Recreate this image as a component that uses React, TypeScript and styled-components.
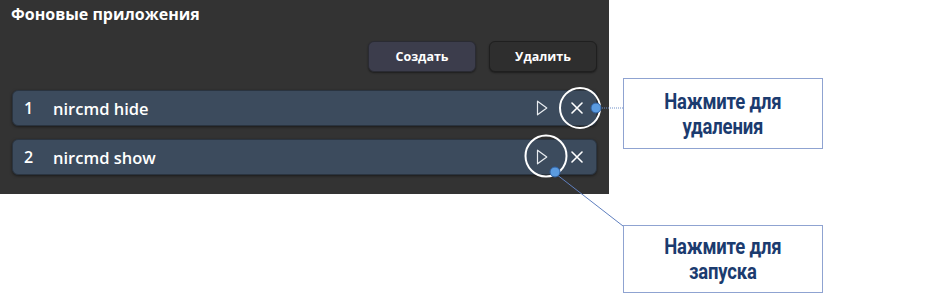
import React from 'react'
import styled, { createGlobalStyle } from 'styled-components'

const GlobalStyle = createGlobalStyle`
  html, body {
    margin: 0;
    padding: 0;
    background: #ffffff;
  }
  body {
    font-family: "Open Sans", "Noto Sans", sans-serif;
  }
`

const Page = styled.div`
  position: relative;
  width: 929px;
  height: 302px;
  overflow: hidden;
`

const Panel = styled.div`
  width: 609px;
  height: 194px;
  box-sizing: border-box;
  background: #333333;
  padding: 3px 12px 0 12px;
  display: flex;
  flex-direction: column;
`

const Title = styled.h1`
  margin: 0 0 0 -1px;
  font-size: 16px;
  font-weight: 700;
  color: #ffffff;
  line-height: 22px;
`

const Toolbar = styled.div`
  display: flex;
  justify-content: flex-end;
  gap: 13px;
  margin-top: 16px;
  margin-bottom: 18px;
`

const Button = styled.button<{ $primary?: boolean }>`
  width: 108px;
  height: 31px;
  border-radius: 6px;
  border: 1px solid ${({ $primary }) => ($primary ? '#2a2b33' : '#1f1f1f')};
  background: ${({ $primary }) => ($primary ? '#3c3d4c' : '#2e2e2e')};
  color: #ffffff;
  font-family: "Open Sans", "Noto Sans", sans-serif;
  font-size: 12.5px;
  font-weight: 700;
  box-shadow: 0 1px 2px rgba(0, 0, 0, 0.45);
  cursor: pointer;
`

const List = styled.div`
  display: flex;
  flex-direction: column;
  gap: 13px;
`

const Row = styled.div`
  display: flex;
  align-items: center;
  height: 36px;
  box-sizing: border-box;
  border-radius: 6px;
  border: 1px solid #2a3440;
  background: #3c4b5d;
  box-shadow: 0 1px 3px rgba(0, 0, 0, 0.5);
  padding: 0 6px 0 11px;
  color: #ffffff;
`

const Index = styled.span`
  width: 29px;
  font-size: 16px;
  font-weight: 600;
`

const Name = styled.span`
  flex: 1;
  font-size: 16.5px;
  font-weight: 600;
`

const IconButton = styled.span`
  width: 26px;
  height: 26px;
  display: flex;
  align-items: center;
  justify-content: center;
  margin-left: 9px;
`

const Callout = styled.div<{ $top: number; $height: number }>`
  position: absolute;
  left: 623px;
  top: ${({ $top }) => $top}px;
  width: 200px;
  height: ${({ $height }) => $height}px;
  box-sizing: border-box;
  border: 1px solid #8fa3d1;
  background: #ffffff;
  display: flex;
  align-items: center;
  justify-content: center;
  text-align: center;
  color: #1b3b6f;
  font-family: "Roboto", "Liberation Sans", sans-serif;
  font-weight: 700;
  font-size: 22px;
  line-height: 25px;
`

const CalloutText = styled.span`
  display: inline-block;
  transform: scaleX(0.84);
  letter-spacing: -0.2px;
`

const Overlay = styled.svg`
  position: absolute;
  left: 0;
  top: 0;
  pointer-events: none;
`

const PlayIcon = () => (
  <svg width="12" height="16" viewBox="0 0 12 16">
    <path d="M1.5 1.2 L10.8 8 L1.5 14.8 Z" fill="none" stroke="#e8ecf0" strokeWidth="1.2" strokeLinejoin="round" />
  </svg>
)

const CloseIcon = () => (
  <svg width="12" height="12" viewBox="0 0 12 12">
    <path d="M1 1 L11 11 M11 1 L1 11" stroke="#ffffff" strokeWidth="1.6" strokeLinecap="round" />
  </svg>
)

const apps = [
  { id: 1, name: 'nircmd hide' },
  { id: 2, name: 'nircmd show' },
]

export default function App() {
  return (
    <Page>
      <GlobalStyle />
      <Panel>
        <Title>Фоновые приложения</Title>
        <Toolbar>
          <Button $primary>Создать</Button>
          <Button>Удалить</Button>
        </Toolbar>
        <List>
          {apps.map((a) => (
            <Row key={a.id}>
              <Index>{a.id}</Index>
              <Name>{a.name}</Name>
              <IconButton><PlayIcon /></IconButton>
              <IconButton><CloseIcon /></IconButton>
            </Row>
          ))}
        </List>
      </Panel>

      <Overlay width="929" height="302">
        <circle cx="580" cy="108" r="20" fill="none" stroke="#ffffff" strokeWidth="2" />
        <circle cx="546" cy="156" r="20.5" fill="none" stroke="#ffffff" strokeWidth="2" />
        <line x1="600" y1="108" x2="623" y2="108" stroke="#6f8fc8" strokeWidth="1" strokeDasharray="1 1" />
        <line x1="556" y1="174" x2="623" y2="226" stroke="#5f7fbf" strokeWidth="1" />
        <circle cx="596" cy="108" r="5" fill="#5b9be0" stroke="#2f5f9f" strokeWidth="1" />
        <circle cx="555" cy="172" r="5" fill="#5b9be0" stroke="#2f5f9f" strokeWidth="1" />
      </Overlay>

      <Callout $top={78} $height={71}>
        <CalloutText>Нажмите для<br />удаления</CalloutText>
      </Callout>
      <Callout $top={225} $height={68}>
        <CalloutText>Нажмите для<br />запуска</CalloutText>
      </Callout>
    </Page>
  )
}
